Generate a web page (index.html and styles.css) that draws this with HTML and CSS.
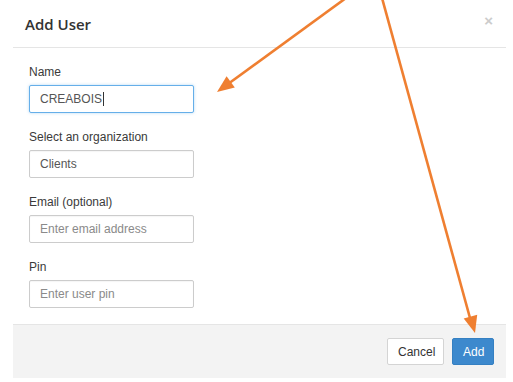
FILE: index.html
```html
<!DOCTYPE html>
<html lang="en">
<head>
    <meta charset="UTF-8">
    <meta name="viewport" content="width=device-width, initial-scale=1.0">
    <title>Add User</title>
    <link rel="stylesheet" href="styles.css">
</head>
<body>
    <div class="modal">
        <div class="modal-header">
            <h4 class="modal-title">Add User</h4>
            <span class="close">&times;</span>
        </div>

        <div class="modal-body">
            <div class="form-group">
                <label>Name</label>
                <div class="form-control focused">CREABOIS<span class="caret"></span></div>
            </div>
            <div class="form-group">
                <label>Select an organization</label>
                <div class="form-control">Clients</div>
            </div>
            <div class="form-group">
                <label>Email (optional)</label>
                <input class="form-control" type="text" placeholder="Enter email address">
            </div>
            <div class="form-group">
                <label>Pin</label>
                <input class="form-control" type="text" placeholder="Enter user pin">
            </div>
        </div>

        <div class="modal-footer">
            <button class="btn btn-default">Cancel</button>
            <button class="btn btn-primary">Add</button>
        </div>
    </div>

    <!-- annotation arrows drawn over the screenshot -->
    <svg class="arrows" width="513" height="382" viewBox="0 0 513 382">
        <line x1="346" y1="-2" x2="228" y2="84" stroke="#ef7f31" stroke-width="2.6"/>
        <polygon points="217,92 234.8,87.5 226.6,76.3" fill="#ef7f31"/>
        <line x1="382" y1="-2" x2="470" y2="318" stroke="#ef7f31" stroke-width="2.6"/>
        <polygon points="475,333 477.2,314.7 463.7,318.5" fill="#ef7f31"/>
    </svg>
</body>
</html>
```

FILE: styles.css
```css
body {
    margin: 0;
    background: #ffffff;
    font-family: "Liberation Sans", Arial, sans-serif;
    font-size: 12px;
    color: #333333;
}

.modal {
    margin-left: 13px;
    width: 493px;
    background: #ffffff;
}

.modal-header {
    height: 47px;
    border-bottom: 1px solid #e5e5e5;
    padding: 0 12px;
    display: flex;
    align-items: center;
    justify-content: space-between;
}

.modal-title {
    margin: 0;
    margin-top: 1px;
    font-family: "Open Sans", sans-serif;
    font-weight: 600;
    font-size: 15px;
    color: #333333;
}

.close {
    margin-top: -7px;
    margin-right: 1px;
    font-size: 15px;
    font-weight: bold;
    color: #cccccc;
}

.modal-body {
    padding: 16px 16px 16px;
}

.form-group {
    margin-bottom: 16px;
}

.form-group:last-child {
    margin-bottom: 0;
}

label {
    display: block;
    line-height: 17px;
    margin-bottom: 4px;
    color: #3a3a3a;
}

.form-control {
    display: flex;
    align-items: center;
    box-sizing: border-box;
    width: 165px;
    height: 28px;
    margin: 0;
    padding: 0 10px;
    border: 1px solid #cccccc;
    border-radius: 2px;
    font-family: "Liberation Sans", Arial, sans-serif;
    font-size: 12px;
    color: #555555;
    background: #ffffff;
    box-shadow: inset 0 1px 1px rgba(0, 0, 0, 0.04);
}

.form-control::placeholder {
    color: #8a8a8a;
}

.focused {
    border-color: #66afe9;
    box-shadow: 0 0 3px rgba(102, 175, 233, 0.5);
}

.caret {
    display: inline-block;
    width: 1px;
    height: 14px;
    margin-left: 1px;
    background: #333333;
}

.modal-footer {
    border-top: 1px solid #e5e5e5;
    background: #f3f3f3;
    padding: 13px 12px;
    display: flex;
    justify-content: flex-end;
    gap: 8px;
}

.btn {
    height: 27px;
    padding: 0 10px;
    border-radius: 2px;
    font-family: "Liberation Sans", Arial, sans-serif;
    font-size: 12px;
    cursor: pointer;
}

.btn-default {
    width: 57px;
    background: #ffffff;
    border: 1px solid #d4d4d4;
    color: #333333;
}

.btn-primary {
    width: 42px;
    background: #3d89cd;
    border: 1px solid #3580c2;
    color: #ffffff;
}

.arrows {
    position: absolute;
    top: 0;
    left: 0;
    pointer-events: none;
}
```
